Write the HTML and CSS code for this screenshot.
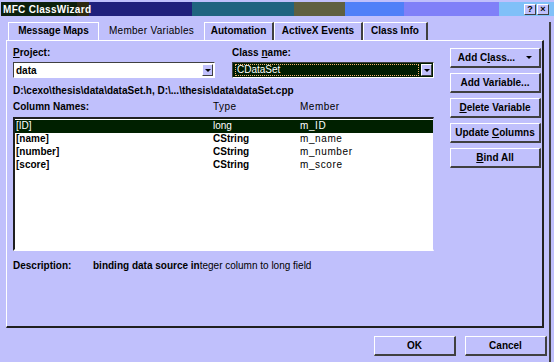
FILE: index.html
```html
<!DOCTYPE html>
<html lang="en">

    <head>
        <meta charset="UTF-8">
        <meta name="viewport" content="width=device-width, initial-scale=1.0">
        <title>MFC ClassWizard</title>
        <link rel="stylesheet" href="styles.css">
    </head>

    <body>
        <div class="window">
            <div class="titlebar">
                <span class="title">MFC ClassWizard</span>
                <div class="capBtns">
                    <span class="capBtn">?</span>
                    <span class="capBtn">&times;</span>
                </div>
            </div>
            <div class="frame">
                <div class="tabs">
                    <div class="tab">Message Maps</div>
                    <div class="tab active">Member Variables</div>
                    <div class="tab">Automation</div>
                    <div class="tab">ActiveX Events</div>
                    <div class="tab">Class Info</div>
                </div>
                <div class="panel">
                    <div class="main">
                        <div class="fields">
                            <div class="field">
                                <div class="label"><u>P</u>roject:</div>
                                <div class="combo">
                                    <span class="value">data</span>
                                    <span class="drop"></span>
                                </div>
                            </div>
                            <div class="field">
                                <div class="label">Class <u>n</u>ame:</div>
                                <div class="combo focused">
                                    <span class="value">CDataSet</span>
                                    <span class="drop"></span>
                                </div>
                            </div>
                        </div>
                        <div class="path">D:\cexo\thesis\data\dataSet.h, D:\...\thesis\data\dataSet.cpp</div>
                        <div class="cols heads">
                            <span>Column Names:</span>
                            <span>Type</span>
                            <span>Member</span>
                        </div>
                        <div class="list">
                            <div class="cols row selected">
                                <span>[ID]</span>
                                <span>long</span>
                                <span>m_ID</span>
                            </div>
                            <div class="cols row">
                                <span>[name]</span>
                                <span>CString</span>
                                <span>m_name</span>
                            </div>
                            <div class="cols row">
                                <span>[number]</span>
                                <span>CString</span>
                                <span>m_number</span>
                            </div>
                            <div class="cols row">
                                <span>[score]</span>
                                <span>CString</span>
                                <span>m_score</span>
                            </div>
                        </div>
                        <div class="desc">
                            <span class="descLabel">Description:</span>
                            <span><b>binding data source in</b>teger column to long field</span>
                        </div>
                    </div>
                    <div class="side">
                        <div class="btn"><span>Add C<u>l</u>ass...</span><span class="caret"></span></div>
                        <div class="btn"><span>Add Variable...</span></div>
                        <div class="btn"><span><u>D</u>elete Variable</span></div>
                        <div class="btn"><span>Update <u>C</u>olumns</span></div>
                        <div class="btn"><span><u>B</u>ind All</span></div>
                    </div>
                </div>
                <div class="footer">
                    <div class="btn wide"><span>OK</span></div>
                    <div class="btn wide"><span>Cancel</span></div>
                </div>
            </div>
        </div>
    </body>

</html>
```

FILE: styles.css
```css
* {
    box-sizing: border-box;
    padding: 0;
    margin: 0;
}

body {
    width: 554px;
    height: 362px;
    overflow: hidden;
    background-color: #c0c0fc;
    font-family: "Liberation Sans", Arial, sans-serif;
    font-size: 10px;
    font-weight: bold;
    color: #000;
}

.window {
    height: 362px;
    padding-top: 2px;
}

.titlebar {
    height: 14px;
    margin-left: 1px;
    display: flex;
    align-items: center;
    justify-content: space-between;
    padding: 0 5px 0 2px;
    background: linear-gradient(to right,
            #0c200c 0 76px,
            #2c2810 76px 88px,
            #20207c 88px 191px,
            #206480 191px 293px,
            #606040 293px 344px,
            #5080f8 344px 403px,
            #8080f8 403px 498px,
            #80c0f8 498px);
}

.title {
    color: #fff;
    font-size: 10px;
    letter-spacing: 0.3px;
}

.capBtns {
    display: flex;
    gap: 1px;
}

.capBtn {
    width: 12px;
    height: 11px;
    background-color: #c0c0fc;
    border: 1px solid;
    border-color: #fff #404040 #404040 #fff;
    font-size: 9px;
    line-height: 9px;
    text-align: center;
}

.frame {
    width: 551px;
    height: 346px;
    border-right: 2px solid #404040;
    border-bottom: 2px solid #606060;
}

.tabs {
    display: flex;
    margin-top: 6px;
    padding-left: 8px;
    height: 18px;
    align-items: flex-end;
}

.tab {
    height: 18px;
    line-height: 16px;
    white-space: nowrap;
    border-top: 1px solid #fff;
    border-left: 1px solid #fff;
    border-right: 2px solid #404040;
    text-align: center;
}

.tab:nth-child(1) {
    width: 91px;
    border-right: 1px solid #fff;
}

.tab.active {
    width: 105px;
    border: none;
    font-weight: normal;
    letter-spacing: 0.3px;
    line-height: 17px;
}

.tab:nth-child(3) {
    width: 70px;
}

.tab:nth-child(4) {
    width: 89px;
}

.tab:nth-child(5) {
    width: 65px;
}

.panel {
    margin-left: 6px;
    width: 538px;
    height: 288px;
    border-top: 1px solid #fff;
    border-left: 1px solid #fff;
    border-right: 2px solid #202020;
    border-bottom: 2px solid #202020;
    padding: 5px 0 0 6px;
    display: flex;
}

.main {
    width: 421px;
}

.fields {
    display: flex;
    gap: 17px;
}

.field {
    width: 202px;
}

.label {
    height: 14px;
    line-height: 14px;
}

.combo {
    margin-top: 2px;
    height: 16px;
    display: flex;
    align-items: center;
    justify-content: space-between;
    background-color: #fff;
    border-top: 1px solid #404040;
    border-left: 1px solid #404040;
    border-right: 1px solid #fff;
    border-bottom: 1px solid #fff;
    padding: 0 1px 0 2px;
}

.combo.focused {
    background-color: #001c00;
    color: #fff;
    font-weight: normal;
}

.combo.focused .value {
    height: 12px;
    line-height: 10px;
    flex: 1;
    margin-right: 2px;
    padding-left: 1px;
    border: 1px dotted #f0b070;
}

.drop {
    width: 11px;
    height: 12px;
    background-color: #c0c0fc;
    border: 1px solid;
    border-color: #fff #404040 #404040 #fff;
    display: flex;
    align-items: center;
    justify-content: center;
}

.drop::after {
    content: "";
    border-left: 3px solid transparent;
    border-right: 3px solid transparent;
    border-top: 3px solid #000;
}

.path {
    margin-top: 6px;
    line-height: 13px;
}

.cols {
    display: grid;
    grid-template-columns: 200px 87px 1fr;
}

.heads {
    margin-top: 3px;
    line-height: 13px;
}

.heads span:nth-child(2),
.heads span:nth-child(3) {
    font-weight: normal;
    letter-spacing: 0.5px;
}

.list {
    margin-top: 4px;
    height: 134px;
    background-color: #fff;
    border-top: 2px solid #202020;
    border-left: 2px solid #202020;
    border-right: 1px solid #c0c0fc;
    border-bottom: 2px solid #fff;
    padding: 1px 0 0 0;
}

.row {
    height: 13px;
    line-height: 12px;
    padding-left: 1px;
    grid-template-columns: 197px 87px 1fr;
}

.row span:nth-child(3) {
    font-weight: normal;
    letter-spacing: 0.6px;
}

.row.selected {
    background-color: #002000;
    color: #fff;
}

.row.selected span {
    font-weight: normal;
}

.desc {
    margin-top: 8px;
    line-height: 13px;
    display: flex;
    font-weight: normal;
}

.descLabel {
    width: 80px;
    font-weight: bold;
}

.side {
    margin: 2px 0 0 16px;
    display: flex;
    flex-direction: column;
    gap: 5px;
}

.btn {
    width: 91px;
    height: 20px;
    display: flex;
    align-items: center;
    justify-content: center;
    background-color: #c0c0fc;
    border-top: 1px solid #fff;
    border-left: 1px solid #fff;
    border-right: 2px solid #404040;
    border-bottom: 2px solid #404040;
    white-space: nowrap;
}

.caret {
    margin-left: 11px;
    border-left: 3px solid transparent;
    border-right: 3px solid transparent;
    border-top: 3px solid #000;
}

.footer {
    display: flex;
    justify-content: flex-end;
    gap: 9px;
    padding: 8px 2px 0 0;
}

.btn.wide {
    width: 82px;
}
```
